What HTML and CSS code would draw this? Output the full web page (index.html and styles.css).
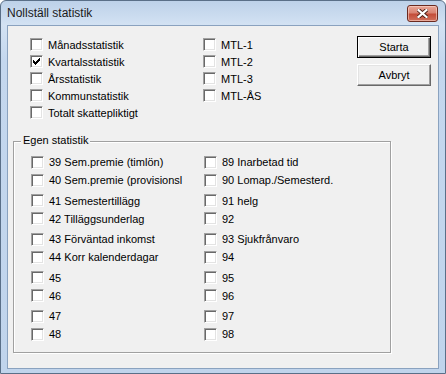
FILE: index.html
```html
<!DOCTYPE html>
<html lang="sv">
<head>
  <meta charset="UTF-8" />
  <title>Nollställ statistik</title>
  <link rel="stylesheet" href="styles.css">
</head>
<body>
  <div class="window">
    <div class="titlebar">
      <span class="title">Nollställ statistik</span>
      <button class="close" type="button" aria-label="Stäng">
        <svg width="11" height="9" viewBox="0 0 11 9">
          <path d="M1.5 1 L9.5 8 M9.5 1 L1.5 8" stroke="#4a1c14" stroke-width="4" stroke-linecap="square" fill="none" />
          <path d="M1.5 1 L9.5 8 M9.5 1 L1.5 8" stroke="#fff" stroke-width="2.2" stroke-linecap="square" fill="none" />
        </svg>
      </button>
    </div>

    <div class="client">
      <div class="top">
        <div class="col col-first" id="col-a"></div>
        <div class="col col-second" id="col-b"></div>
        <div class="actions">
          <button class="btn btn-default" type="button">Starta</button>
          <button class="btn" type="button">Avbryt</button>
        </div>
      </div>

      <div class="group">
        <span class="legend">Egen statistik</span>
        <div class="grid" id="own"></div>
      </div>
    </div>
  </div>

  <script>
    const check = '<svg width="7" height="7" viewBox="0 0 7 7"><path fill="#000" d="M6 0h1v1h-1z M5 1h2v1h-2z M0 2h1v1h-1z M4 2h3v1h-3z M0 3h2v1h-2z M3 3h3v1h-3z M0 4h5v1h-5z M1 5h3v1h-3z M2 6h1v1h-1z"/></svg>';

    function item(label, checked) {
      return `<label class="cb"><span class="box">${checked ? check : ''}</span><span>${label}</span></label>`;
    }

    const colA = [
      ["Månadsstatistik", false],
      ["Kvartalsstatistik", true],
      ["Årsstatistik", false],
      ["Kommunstatistik", false],
      ["Totalt skattepliktigt", false]
    ];
    const colB = ["MTL-1", "MTL-2", "MTL-3", "MTL-ÅS"];

    document.getElementById("col-a").innerHTML = colA.map(c => item(c[0], c[1])).join("");
    document.getElementById("col-b").innerHTML = colB.map(c => item(c, false)).join("");

    const left = [
      "39 Sem.premie (timlön)",
      "40 Sem.premie (provisionsl",
      "41 Semestertillägg",
      "42 Tilläggsunderlag",
      "43 Förväntad inkomst",
      "44 Korr kalenderdagar",
      "45", "46", "47", "48"
    ];
    const right = [
      "89 Inarbetad tid",
      "90 Lomap./Semesterd.",
      "91 helg",
      "92",
      "93 Sjukfrånvaro",
      "94", "95", "96", "97", "98"
    ];

    let html = "";
    left.forEach((l, i) => {
      html += item(l, false) + item(right[i], false);
    });
    document.getElementById("own").innerHTML = html;
  </script>
</body>
</html>
```

FILE: styles.css
```css
body {
  margin: 0;
  width: 446px;
  height: 374px;
  overflow: hidden;
  font-family: "Liberation Sans Narrow", "Arial Narrow", "Liberation Sans", sans-serif;
  font-size: 11px;
  color: #000;
}
.window {
  box-sizing: border-box;
  height: 374px;
  border: 1px solid #5a6f88;
  border-radius: 6px 6px 0 0;
  background: linear-gradient(#bdd1e9, #d3e2f3 24px, #c4d7ee 60px, #c0d4ec);
  padding: 0 6px 4px 6px;
  display: flex;
  flex-direction: column;
}
.titlebar {
  height: 24px;
  display: flex;
  justify-content: space-between;
  align-items: flex-start;
}
.title {
  font-family: "Liberation Sans", sans-serif;
  font-size: 12px;
  line-height: 24px;
  padding-left: 0;
  color: #1a1a1a;
}
.close {
  box-sizing: border-box;
  width: 31px;
  height: 17px;
  margin: 4px 1px 0 0;
  padding: 0;
  border: 1px solid #6b2a20;
  border-radius: 3px;
  background: linear-gradient(#e9a697, #d98473 45%, #c44d39 55%, #d0705c);
  box-shadow: inset 0 0 0 1px rgba(255, 220, 210, 0.55);
  display: flex;
  align-items: center;
  justify-content: center;
}
.client {
  flex: 1;
  background: #f0f0f0;
  border: 1px solid #8aa2bf;
}
.top {
  display: flex;
  padding-top: 10px;
}
.col-first {
  margin-left: 22px;
  width: 173px;
}
.col-second {
  width: 154px;
}
.col .cb {
  height: 17px;
}
.actions {
  display: flex;
  flex-direction: column;
  gap: 6px;
}
.btn {
  box-sizing: border-box;
  width: 74px;
  height: 22px;
  padding: 0;
  font: inherit;
  color: #000;
  background: #f0f0f0;
  border: 1px solid;
  border-color: #fff #696969 #696969 #fff;
  box-shadow: inset -1px -1px #a0a0a0, inset 1px 1px #e3e3e3;
}
.btn-default {
  border-color: #000;
  box-shadow: inset 1px 1px #fff, inset -1px -1px #696969, inset -2px -2px #a0a0a0;
}
.cb {
  display: flex;
  align-items: center;
  gap: 5px;
  white-space: nowrap;
}
.box {
  box-sizing: border-box;
  width: 13px;
  height: 13px;
  flex: none;
  background: #fff;
  border: 1px solid;
  border-color: #a0a0a0 #fff #fff #a0a0a0;
  box-shadow: inset 1px 1px #696969, inset -1px -1px #e3e3e3;
  display: flex;
  align-items: center;
  justify-content: center;
}
.group {
  box-sizing: border-box;
  width: 378px;
  height: 212px;
  margin: 20px 0 0 5px;
  border: 1px solid #a0a0a0;
  box-shadow: inset 1px 1px #fff, 1px 1px #fff;
}
.legend {
  display: table;
  margin: -9px 0 0 7px;
  padding: 0 2px;
  line-height: 14px;
  background: #f0f0f0;
}
.grid {
  display: grid;
  grid-template-columns: 173px 1fr;
  grid-template-rows: repeat(5, 18px 20.5px);
  align-items: start;
  margin: 6px 0 0 17px;
}
.grid .cb {
  height: 18px;
}
```
